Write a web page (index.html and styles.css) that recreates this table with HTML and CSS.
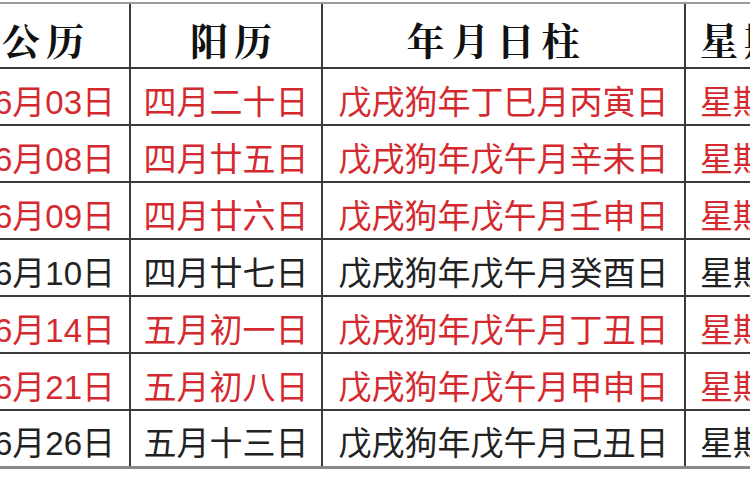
FILE: index.html
```html
<!DOCTYPE html>
<html lang="zh-CN">
<head>
<meta charset="utf-8">
<link rel="stylesheet" href="styles.css">
</head>
<body>
<div class="crop">
<table class="cal">
<colgroup>
<col class="c1"><col class="c2"><col class="c3"><col class="c4">
</colgroup>
<thead>
<tr><th class="h1">公历</th><th class="h2">阳历</th><th class="h3">年月日柱</th><th class="h4">星期</th></tr>
</thead>
<tbody>
<tr class="red"><td class="d1">6月03日</td><td>四月二十日</td><td>戊戌狗年丁巳月丙寅日</td><td class="d4">星期日</td></tr>
<tr class="red"><td class="d1">6月08日</td><td>四月廿五日</td><td>戊戌狗年戊午月辛未日</td><td class="d4">星期五</td></tr>
<tr class="red"><td class="d1">6月09日</td><td>四月廿六日</td><td>戊戌狗年戊午月壬申日</td><td class="d4">星期六</td></tr>
<tr><td class="d1">6月10日</td><td>四月廿七日</td><td>戊戌狗年戊午月癸酉日</td><td class="d4">星期日</td></tr>
<tr class="red"><td class="d1">6月14日</td><td>五月初一日</td><td>戊戌狗年戊午月丁丑日</td><td class="d4">星期四</td></tr>
<tr class="red"><td class="d1">6月21日</td><td>五月初八日</td><td>戊戌狗年戊午月甲申日</td><td class="d4">星期四</td></tr>
<tr><td class="d1">6月26日</td><td>五月十三日</td><td>戊戌狗年戊午月己丑日</td><td class="d4">星期二</td></tr>
</tbody>
</table>
</div>
</body>
</html>
```

FILE: styles.css
```css
html, body {
  margin: 0;
  padding: 0;
  background: #ffffff;
}
.crop {
  width: 750px;
  height: 500px;
  overflow: hidden;
  padding-top: 2px;
  box-sizing: border-box;
}
.cal {
  border-collapse: collapse;
  table-layout: fixed;
  width: 900px;
  font-family: "Liberation Sans", "Noto Sans CJK SC", sans-serif;
  color: #222222;
}
.c1 { width: 130px; }
.c2 { width: 192px; }
.c3 { width: 363px; }
.c4 { width: 215px; }
.cal th, .cal td {
  border-left: 2px solid #3a3a3a;
  border-bottom: 2px solid #3a3a3a;
  text-align: center;
  white-space: nowrap;
  overflow: hidden;
  padding: 0;
}
.cal th:first-child, .cal td:first-child {
  border-left: none;
}
.cal thead th {
  border-top: 2px solid #9a9a9a;
  height: 65px;
  font-family: "Noto Serif CJK SC", "Noto Sans CJK SC", serif;
  font-weight: 700;
  font-size: 38px;
  color: #111111;
  padding-top: 6px;
  box-sizing: border-box;
  letter-spacing: 6px;
}
.cal thead th.h1 {
  text-align: left;
  padding-left: 2px;
}
.cal thead th.h2 {
  padding-left: 16px;
}
.cal thead th.h3 {
  padding-right: 14px;
  letter-spacing: 7px;
}
.cal thead th.h4 {
  text-align: left;
  padding-left: 14px;
}
.cal td {
  height: 57px;
  font-size: 33px;
  padding-top: 6px;
  box-sizing: border-box;
}
.cal td.d1 {
  text-align: left;
  text-indent: -6px;
}
.cal td.d4 {
  text-align: left;
  padding-left: 14px;
}
.cal tbody tr:last-child td {
  border-bottom: 3px solid #8a8a8a;
}
.red td {
  color: #d42a2f;
}
```
